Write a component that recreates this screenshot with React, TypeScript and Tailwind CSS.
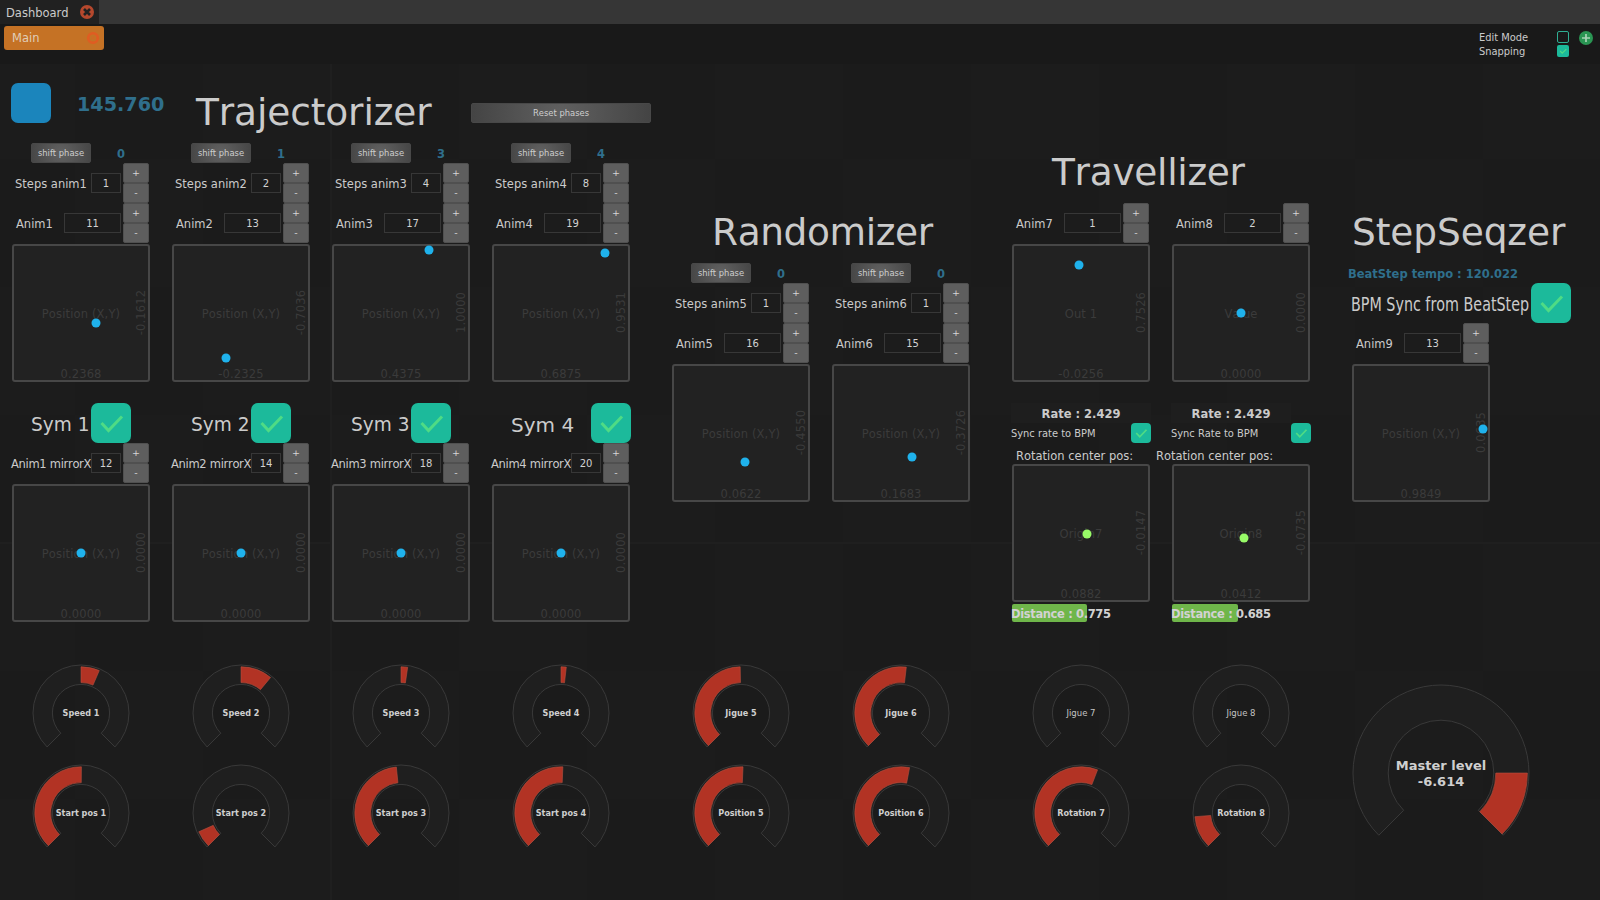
import type { ReactNode } from "react";

type Dial = { label: string; from: number; to: number; plain?: boolean };

const START = -135;
const END = 135;

function sector(c: number, inner: number, outer: number, from: number, to: number) {
  const pt = (r: number, deg: number) => {
    const a = (deg * Math.PI) / 180;
    return `${(c + r * Math.sin(a)).toFixed(2)} ${(c - r * Math.cos(a)).toFixed(2)}`;
  };
  const large = to - from > 180 ? 1 : 0;
  return `M${pt(outer, from)} A${outer} ${outer} 0 ${large} 1 ${pt(outer, to)} L${pt(inner, to)} A${inner} ${inner} 0 ${large} 0 ${pt(inner, from)} Z`;
}

function Knob({ dial }: { dial: Dial }) {
  return (
    <div className="grid h-[100px] w-[100px] place-items-center">
      <svg className="col-start-1 row-start-1 h-[100px] w-[100px]" viewBox="0 0 100 100">
        <path d={sector(50, 28.6, 48, START, END)} fill="#1f1f1f" stroke="#393939" strokeWidth="1" />
        {dial.to > dial.from && (
          <path d={sector(50, 30.4, 46.2, dial.from, dial.to)} fill="#b23324" stroke="#b5503f" strokeWidth="0.6" />
        )}
      </svg>
      <span
        className={
          dial.plain
            ? "z-10 col-start-1 row-start-1 text-[8.5px] leading-none text-[#c4c4c4]"
            : "z-10 col-start-1 row-start-1 text-[8.1px] leading-none font-bold whitespace-nowrap text-[#cfcfcf]"
        }
      >
        {dial.label}
      </span>
    </div>
  );
}

function KnobColumn({ top, bottom }: { top: Dial; bottom: Dial }) {
  return (
    <div className="flex w-[140px] flex-col items-center">
      <Knob dial={top} />
      <Knob dial={bottom} />
    </div>
  );
}

function Tick({ className, width = 2.6 }: { className: string; width?: number }) {
  return (
    <svg className={className} viewBox="0 0 40 40" fill="none">
      <path d="M10.5 20 L17.5 27.5 L31 13.5" stroke="#4fdb85" strokeWidth={width} />
    </svg>
  );
}

function BigCheck() {
  return (
    <div className="h-10 w-10 shrink-0 rounded-[7px] bg-[#1cba9b]">
      <Tick className="h-10 w-10" width={3} />
    </div>
  );
}

function PlusMinus() {
  const cls =
    "flex h-5 w-[26px] items-center justify-center rounded-[2px] border border-[#505050] bg-[#5e5e5e] text-[9.5px] leading-none text-[#d6d6d6]";
  return (
    <div className="ml-[2px] flex flex-col">
      <button className={cls}>+</button>
      <button className={cls}>-</button>
    </div>
  );
}

function ValueBox({ value, wide }: { value: number; wide?: boolean }) {
  return (
    <div
      className={`flex h-5 items-center justify-center border border-[#373737] bg-[#1c1c1c] text-[10px] text-[#d2d2d2] ${wide ? "w-[57px]" : "w-[30px]"}`}
    >
      {value}
    </div>
  );
}

function StepRow({ label, value }: { label: string; value: number }) {
  return (
    <div className="flex h-10 items-center">
      <span className="w-[80px] pl-[4px] pt-[3px] text-[11.5px] leading-none whitespace-nowrap">{label}</span>
      <ValueBox value={value} />
      <PlusMinus />
    </div>
  );
}

function AnimRow({ label, value }: { label: string; value: number }) {
  return (
    <div className="flex h-10 items-center">
      <span className="w-[53px] pl-[5px] pt-[3px] text-[11.5px] leading-none whitespace-nowrap">{label}</span>
      <ValueBox value={value} wide />
      <PlusMinus />
    </div>
  );
}

function MirrorRow({ label, value }: { label: string; value: number }) {
  return (
    <div className="flex h-10 items-center">
      <span className="w-[80px] pt-[3px] text-[11.5px] leading-none tracking-[-0.3px] whitespace-nowrap">{label}</span>
      <ValueBox value={value} />
      <PlusMinus />
    </div>
  );
}

function PhaseRow({ value }: { value: number }) {
  return (
    <div className="flex h-5 items-center">
      <button className="ml-5 h-5 w-[60px] rounded-[2px] border border-[#484848] bg-[radial-gradient(circle,#626262,#464646)] text-[8.4px] leading-none text-[#cfcfcf]">
        shift phase
      </button>
      <span className="w-[60px] pt-[3px] text-center text-[11.5px] leading-none font-bold text-[#2f6f8c]">{value}</span>
    </div>
  );
}

function Pad({ label = "Position (X,Y)", x, y, green }: { label?: string; x: string; y: string; green?: boolean }) {
  const cx = 67 + 63.3 * parseFloat(x);
  const cy = 67 - 63.3 * parseFloat(y);
  return (
    <div className="relative ml-px mt-px mb-px h-[138px] w-[138px] shrink-0 rounded-[3px] border-2 border-[#474747] bg-[#222222] text-[11.5px] tracking-[0.15px] text-[#3b3b3b]">
      <span className="absolute inset-0 flex items-center justify-center pt-[3px] leading-none whitespace-nowrap">{label}</span>
      <span className="absolute inset-x-0 bottom-[-1px] text-center leading-[13px]">{x}</span>
      <span className="absolute top-[59px] left-[97px] w-[60px] -rotate-90 text-center leading-[15px]">{y}</span>
      <span
        className={`absolute h-[9px] w-[9px] -translate-x-1/2 -translate-y-1/2 rounded-full ${green ? "bg-[#98fb68]" : "bg-[#1fb2ec]"}`}
        style={{ left: cx, top: cy }}
      />
    </div>
  );
}

function Title({ children, className = "" }: { children: ReactNode; className?: string }) {
  return <h2 className={`text-[37.5px] leading-10 whitespace-nowrap text-[#cbcbcb] ${className}`}>{children}</h2>;
}

const TRAJ = [
  { n: 1, phase: 0, steps: 1, anim: 11, x: "0.2368", y: "-0.1612", mirror: 12 },
  { n: 2, phase: 1, steps: 2, anim: 13, x: "-0.2325", y: "-0.7036", mirror: 14 },
  { n: 3, phase: 3, steps: 4, anim: 17, x: "0.4375", y: "1.0000", mirror: 18 },
  { n: 4, phase: 4, steps: 8, anim: 19, x: "0.6875", y: "0.9531", mirror: 20 },
];

function Trajectorizer() {
  return (
    <section className="flex w-[640px] flex-col pt-[19px]">
      <div className="flex h-[60px] items-start">
        <div className="h-10 w-10 rounded-[7px] bg-[#1b85bc]" />
        <span className="ml-[26px] w-[119px] text-[19.2px] leading-[43px] font-bold text-[#2f6f8c]">145.760</span>
        <Title className="mt-[9px] w-[275px] tracking-[-0.12px]">Trajectorizer</Title>
        <button className="mt-5 h-5 w-[180px] rounded-[2px] border border-[#484848] bg-[radial-gradient(circle,#606060,#444444)] text-[8.4px] leading-none text-[#cfcfcf]">
          Reset phases
        </button>
      </div>
      <div className="flex gap-5">
        {TRAJ.map((t) => (
          <div key={t.n} className="flex w-[140px] flex-col">
            <PhaseRow value={t.phase} />
            <StepRow label={`Steps anim${t.n}`} value={t.steps} />
            <AnimRow label={`Anim${t.n}`} value={t.anim} />
            <Pad x={t.x} y={t.y} />
            <div className="mt-5 flex h-10 items-center pl-5">
              <span
                className={`origin-left pt-[3px] leading-10 whitespace-nowrap ${t.n === 4 ? "w-20 text-[20px]" : "w-[60px] scale-x-[0.95] text-[19.5px]"}`}
              >
                Sym {t.n}
              </span>
              <BigCheck />
            </div>
            <MirrorRow label={`Anim${t.n} mirrorX`} value={t.mirror} />
            <Pad x="0.0000" y="0.0000" />
          </div>
        ))}
      </div>
    </section>
  );
}

const RANDOM = [
  { n: 5, anim: 16, x: "0.0622", y: "-0.4550" },
  { n: 6, anim: 15, x: "0.1683", y: "-0.3726" },
];

function Randomizer() {
  return (
    <section className="ml-5 flex w-[300px] flex-col pt-[148px]">
      <Title className="mb-[11px] pl-[41px] tracking-[-0.4px]">Randomizer</Title>
      <div className="flex gap-5">
        {RANDOM.map((r) => (
          <div key={r.n} className="flex w-[140px] flex-col">
            <PhaseRow value={0} />
            <StepRow label={`Steps anim${r.n}`} value={1} />
            <AnimRow label={`Anim${r.n}`} value={r.anim} />
            <Pad x={r.x} y={r.y} />
          </div>
        ))}
      </div>
    </section>
  );
}

function SyncRow({ label }: { label: string }) {
  return (
    <div className="flex h-5 items-center justify-between">
      <span className="pt-px text-[9.9px] leading-none whitespace-nowrap">{label}</span>
      <div className="h-5 w-5 rounded-[4px] bg-[#1cba9b]">
        <Tick className="h-5 w-5" width={3.6} />
      </div>
    </div>
  );
}

function Distance({ value }: { value: string }) {
  return (
    <div className="ml-px mt-px grid h-[18px] w-[140px] items-center">
      <div
        className="col-start-1 row-start-1 h-[18px] rounded-[2px] bg-[#6fb64a]"
        style={{ width: parseFloat(value) * 96.5 }}
      />
      <span className="z-10 col-start-1 row-start-1 ml-[-1px] pt-[3px] text-[11.5px] tracking-[-0.36px] leading-none font-bold whitespace-nowrap text-[#d2d2d2]">
        Distance : {value}
      </span>
    </div>
  );
}

function Travellizer() {
  return (
    <section className="ml-10 flex w-[300px] flex-col pt-[88px]">
      <Title className="mb-[11px] pl-[41px] tracking-[-0.3px]">Travellizer</Title>
      <div className="flex gap-5">
        <div className="flex w-[140px] flex-col">
          <AnimRow label="Anim7" value={1} />
          <Pad label="Out 1" x="-0.0256" y="0.7526" />
          <div className="mt-5 h-5 w-[140px] bg-[#1e1e1e] pt-px text-center text-[11.5px] leading-5 font-bold">Rate : 2.429</div>
          <SyncRow label="Sync rate to BPM" />
          <div className="h-5 pl-[5px] text-[11.5px] leading-[26px] whitespace-nowrap">Rotation center pos:</div>
          <Pad label="Origin7" x="0.0882" y="-0.0147" green />
          <Distance value="0.775" />
        </div>
        <div className="flex w-[140px] flex-col">
          <AnimRow label="Anim8" value={2} />
          <Pad label="Value" x="0.0000" y="0.0000" />
          <div className="mt-5 h-5 w-[120px] bg-[#1e1e1e] pt-px text-center text-[11.5px] leading-5 font-bold">Rate : 2.429</div>
          <SyncRow label="Sync Rate to BPM" />
          <div className="ml-[-15px] h-5 text-[11.5px] leading-[26px] whitespace-nowrap">Rotation center pos:</div>
          <Pad label="Origin8" x="0.0412" y="-0.0735" green />
          <Distance value="0.685" />
        </div>
      </div>
    </section>
  );
}

function StepSeqzer() {
  return (
    <section className="ml-10 flex w-[240px] flex-col pt-[148px]">
      <Title className="mb-[11px] pl-px tracking-[-0.1px]">StepSeqzer</Title>
      <div className="ml-[-3px] h-5 text-[11.5px] leading-[22px] font-bold whitespace-nowrap text-[#2f6f8c]">
        BeatStep tempo : 120.022
      </div>
      <div className="flex h-10">
        <span className="w-[180px] origin-left scale-x-[0.753] text-[19px] leading-[43px] whitespace-nowrap">
          BPM Sync from BeatStep
        </span>
        <BigCheck />
      </div>
      <AnimRow label="Anim9" value={13} />
      <Pad x="0.9849" y="0.0635" />
    </section>
  );
}

const KNOBS: [Dial, Dial][] = [
  [{ label: "Speed 1", from: 0, to: 23.3 }, { label: "Start pos 1", from: START, to: 0.5 }],
  [{ label: "Speed 2", from: 0, to: 39.8 }, { label: "Start pos 2", from: START, to: -114 }],
  [{ label: "Speed 3", from: 0, to: 8.3 }, { label: "Start pos 3", from: START, to: -5.8 }],
  [{ label: "Speed 4", from: 0, to: 6.6 }, { label: "Start pos 4", from: START, to: 2.3 }],
  [{ label: "Jigue 5", from: START, to: -1 }, { label: "Position 5", from: START, to: 2.5 }],
  [{ label: "Jigue 6", from: START, to: 6.6 }, { label: "Position 6", from: START, to: 10.7 }],
  [{ label: "Jigue 7", from: START, to: START, plain: true }, { label: "Rotation 7", from: START, to: 21 }],
  [{ label: "Jigue 8", from: START, to: START, plain: true }, { label: "Rotation 8", from: START, to: -94.6 }],
];

function Knobs() {
  const group = (a: number, b: number) => (
    <div className="flex gap-5">
      {KNOBS.slice(a, b).map(([top, bottom]) => (
        <KnobColumn key={top.label} top={top} bottom={bottom} />
      ))}
    </div>
  );
  return (
    <div className="flex pl-[11px]">
      {group(0, 4)}
      <div className="ml-10">{group(4, 6)}</div>
      <div className="ml-10">{group(6, 8)}</div>
      <div className="ml-10 mt-5 grid h-[180px] w-[180px] place-items-center">
        <svg className="col-start-1 row-start-1 h-[180px] w-[180px]" viewBox="0 0 180 180">
          <path d={sector(90, 52.8, 88, START, END)} fill="#1f1f1f" stroke="#393939" strokeWidth="1" />
          <path d={sector(90, 54.8, 86.4, 90, END)} fill="#b23324" stroke="#b5503f" strokeWidth="0.6" />
        </svg>
        <span className="z-10 col-start-1 row-start-1 pt-px text-center text-[13px] leading-4 font-bold whitespace-nowrap text-[#cfcfcf]">
          Master level
          <br />
          -6.614
        </span>
      </div>
    </div>
  );
}

export default function App() {
  return (
    <div className="flex h-[900px] w-[1600px] flex-col overflow-hidden bg-[#191919] font-['DejaVu_Sans',Verdana,sans-serif] text-[#cbcbcb] [font-kerning:none]">
      <header className="flex h-6 shrink-0 bg-[#363636]">
        <div className="flex w-[99px] items-center bg-[#212121] pl-[6px]">
          <span className="w-[74px] pt-[3px] text-[11.5px] leading-none">Dashboard</span>
          <svg className="h-[14px] w-[14px]" viewBox="0 0 14 14">
            <circle cx="7" cy="7" r="7" fill="#b5482d" />
            <path d="M4 4 L10 10 M10 4 L4 10" stroke="#212121" strokeWidth="2.6" />
          </svg>
        </div>
      </header>
      <div className="flex h-10 shrink-0 items-start justify-between">
        <div className="ml-1 mt-[2px] flex h-6 w-[100px] items-center rounded-[3px] bg-[#c57225] pl-2 text-[#e0cdb8]">
          <span className="w-[74px] pt-[2px] text-[11.5px] leading-none">Main</span>
          <svg className="mb-px h-[14px] w-[14px]" viewBox="0 0 14 14" fill="none">
            <circle cx="7" cy="7" r="4.8" stroke="#e05c22" strokeWidth="2.6" />
            <path d="M5.6 5.6 L8.4 8.4 M8.4 5.6 L5.6 8.4" stroke="#d06a24" strokeWidth="1" />
          </svg>
        </div>
        <div className="flex pr-[7px] pt-[6px]">
          <div className="flex w-[78px] flex-col pt-px text-[9.9px] leading-[14px]">
            <span>Edit Mode</span>
            <span>Snapping</span>
          </div>
          <div className="flex flex-col gap-[2px] pt-px">
            <div className="h-3 w-3 rounded-[2px] border border-[#2fae93]" />
            <div className="h-3 w-3 rounded-[2px] bg-[#1cba9b]">
              <Tick className="h-3 w-3" width={4} />
            </div>
          </div>
          <svg className="ml-[10px] mt-[1px] h-[14px] w-[14px]" viewBox="0 0 14 14">
            <circle cx="7" cy="7" r="7" fill="#2a9553" />
            <path d="M7 3 V11 M3 7 H11" stroke="#a9d3b6" strokeWidth="1.7" />
          </svg>
        </div>
      </div>
      <main className="flex h-[836px] flex-col bg-[#1b1b1b] bg-[linear-gradient(#1f1f1f,#1f1f1f),linear-gradient(#1f1f1f,#1f1f1f),repeating-conic-gradient(#1b1b1b_0_25%,#1c1c1c_0_50%)] bg-[size:2px_836px,1600px_2px,256px_256px] bg-[position:330px_0,0_478px,75px_95px] [background-repeat:no-repeat,no-repeat,repeat]">
        <div className="flex h-[599px] pl-[11px]">
          <Trajectorizer />
          <Randomizer />
          <Travellizer />
          <StepSeqzer />
        </div>
        <Knobs />
      </main>
    </div>
  );
}
